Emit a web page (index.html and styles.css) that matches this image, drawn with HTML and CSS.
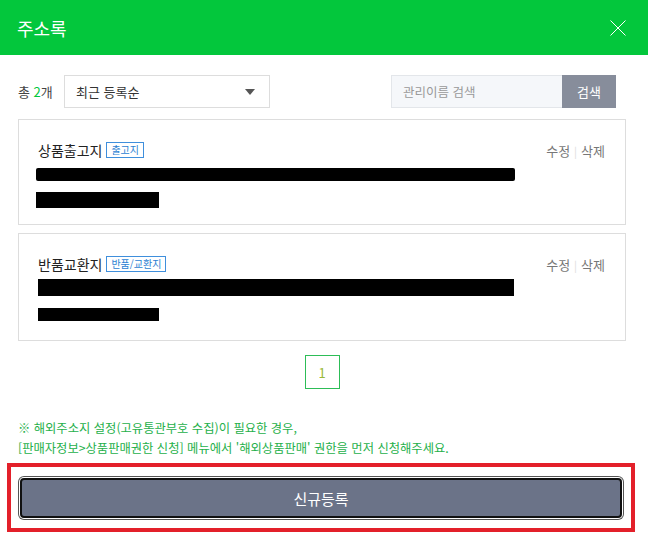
FILE: index.html
```html
<!DOCTYPE html>
<html lang="ko">
<head>
    <meta charset="UTF-8">
    <meta name="viewport" content="width=device-width, initial-scale=1.0">
    <title>주소록</title>
    <link rel="stylesheet" href="styles.css">
</head>
<body>
    <div class="modal">
        <div class="modal-header">
            <h1 class="modal-title">주소록</h1>
            <button class="close-btn" aria-label="닫기">
                <svg width="16" height="16" viewBox="0 0 16 16">
                    <path d="M0.5 0.5 L15.5 15.5 M15.5 0.5 L0.5 15.5" stroke="#fff" stroke-width="1" fill="none"/>
                </svg>
            </button>
        </div>
        <div class="modal-body">
            <div class="toolbar">
                <div class="toolbar-left">
                    <span class="total">총 <em>2</em>개</span>
                    <div class="select-box">
                        <span>최근 등록순</span>
                        <i class="caret"></i>
                    </div>
                </div>
                <div class="search">
                    <input type="text" class="search-input" placeholder="관리이름 검색">
                    <button class="search-btn">검색</button>
                </div>
            </div>

            <div class="address-list">
                <div class="address-item">
                    <div class="item-head">
                        <div class="item-name">
                            상품출고지
                            <span class="badge">출고지</span>
                        </div>
                        <div class="item-actions">
                            <a href="#">수정</a><span class="sep">|</span><a href="#">삭제</a>
                        </div>
                    </div>
                    <div class="redact first-a"></div>
                    <div class="redact second-a"></div>
                </div>
                <div class="address-item">
                    <div class="item-head">
                        <div class="item-name">
                            반품교환지
                            <span class="badge">반품/교환지</span>
                        </div>
                        <div class="item-actions">
                            <a href="#">수정</a><span class="sep">|</span><a href="#">삭제</a>
                        </div>
                    </div>
                    <div class="redact first-b"></div>
                    <div class="redact second-b"></div>
                </div>
            </div>

            <div class="pagination">
                <a href="#" class="page current">1</a>
            </div>

            <p class="notice">
                ※ 해외주소지 설정(고유통관부호 수집)이 필요한 경우,<br>
                [판매자정보&gt;상품판매권한 신청] 메뉴에서 '해외상품판매' 권한을 먼저 신청해주세요.
            </p>

            <div class="highlight">
                <button class="register-btn">신규등록</button>
            </div>
        </div>
    </div>
</body>
</html>
```

FILE: styles.css
```css
* {
    box-sizing: border-box;
    margin: 0;
    padding: 0;
    font-family: "Noto Sans CJK KR", "Noto Sans", sans-serif;
}
body {
    background-color: #fff;
    color: #333;
    width: 648px;
}
.modal-header {
    background-color: #03c73c;
    height: 55px;
    display: flex;
    align-items: center;
    justify-content: space-between;
    padding: 0 22px 0 17px;
}
.modal-title {
    color: #fff;
    font-size: 18px;
    font-weight: 400;
}
.close-btn {
    background: none;
    border: none;
    width: 16px;
    height: 16px;
    cursor: pointer;
    display: flex;
}
.modal-body {
    padding: 20px 22px 0 18px;
}
.toolbar {
    display: flex;
    justify-content: space-between;
    align-items: center;
    height: 33px;
    padding-right: 10px;
    margin-bottom: 11px;
}
.toolbar-left {
    display: flex;
    align-items: center;
}
.total {
    font-size: 13px;
    color: #444;
    width: 46px;
}
.total em {
    font-style: normal;
    color: #03c73c;
}
.select-box {
    width: 206px;
    height: 33px;
    border: 1px solid #ddd;
    display: flex;
    align-items: center;
    justify-content: space-between;
    padding: 0 14px 0 11px;
    font-size: 13px;
    color: #333;
}
.caret {
    width: 0;
    height: 0;
    border-left: 5px solid transparent;
    border-right: 5px solid transparent;
    border-top: 6px solid #555;
}
.search {
    display: flex;
    height: 33px;
}
.search-input {
    width: 171px;
    height: 33px;
    border: 1px solid #e3e6ea;
    border-right: none;
    background-color: #f5f7fa;
    padding: 0 11px;
    font-size: 12.5px;
    outline: none;
}
.search-input::placeholder {
    color: #999;
}
.search-btn {
    width: 54px;
    height: 33px;
    border: none;
    background-color: #878d9b;
    color: #fff;
    font-size: 13px;
}
.address-item {
    border: 1px solid #ddd;
    padding: 20px 20px 0 19px;
    margin-bottom: 8px;
}
.address-item:first-child {
    height: 106px;
}
.address-item:last-child {
    height: 108px;
    margin-bottom: 0;
}
.item-head {
    display: flex;
    justify-content: space-between;
    align-items: center;
    height: 20px;
}
.item-name {
    font-size: 14px;
    font-weight: 400;
    color: #222;
    display: flex;
    align-items: center;
}
.badge {
    display: inline-block;
    margin-left: 4px;
    height: 16px;
    line-height: 14px;
    padding: 0 4px;
    border: 1px solid #3f8fdc;
    color: #2d7fd2;
    font-size: 10px;
}
.item-actions {
    font-size: 13px;
    color: #777;
}
.item-actions a {
    color: #777;
    text-decoration: none;
}
.sep {
    color: #ddd;
    margin: 0 4px;
    font-size: 11px;
}
.redact {
    background-color: #000;
}
.first-a {
    margin: 8px 0 0 -2px;
    height: 13px;
    width: 479px;
    border-radius: 2px;
}
.second-a {
    margin: 11px 0 0 -2px;
    height: 16px;
    width: 123px;
}
.first-b {
    margin-top: 5px;
    height: 17px;
    width: 476px;
}
.second-b {
    margin-top: 12px;
    height: 13px;
    width: 121px;
}
.pagination {
    display: flex;
    justify-content: center;
    margin-top: 14px;
}
.page {
    width: 35px;
    height: 34px;
    border: 1px solid #2dbd57;
    display: flex;
    align-items: center;
    justify-content: center;
    color: #9ab83a;
    font-size: 13px;
    text-decoration: none;
}
.notice {
    margin-top: 29px;
    font-size: 12.3px;
    line-height: 20px;
    color: #25b04a;
}
.highlight {
    margin: 5px -9px 0 -11px;
    border: 4px solid #e3202a;
    padding: 11px 9px 10px 9px;
    height: 69px;
}
.register-btn {
    display: block;
    width: 100%;
    height: 40px;
    background-color: #6b7388;
    color: #fff;
    font-size: 15px;
    border: 2px solid #111;
    border-radius: 4px;
    box-shadow: 0 0 0 1px #fff, 0 0 0 2px #555;
    cursor: pointer;
}
```
